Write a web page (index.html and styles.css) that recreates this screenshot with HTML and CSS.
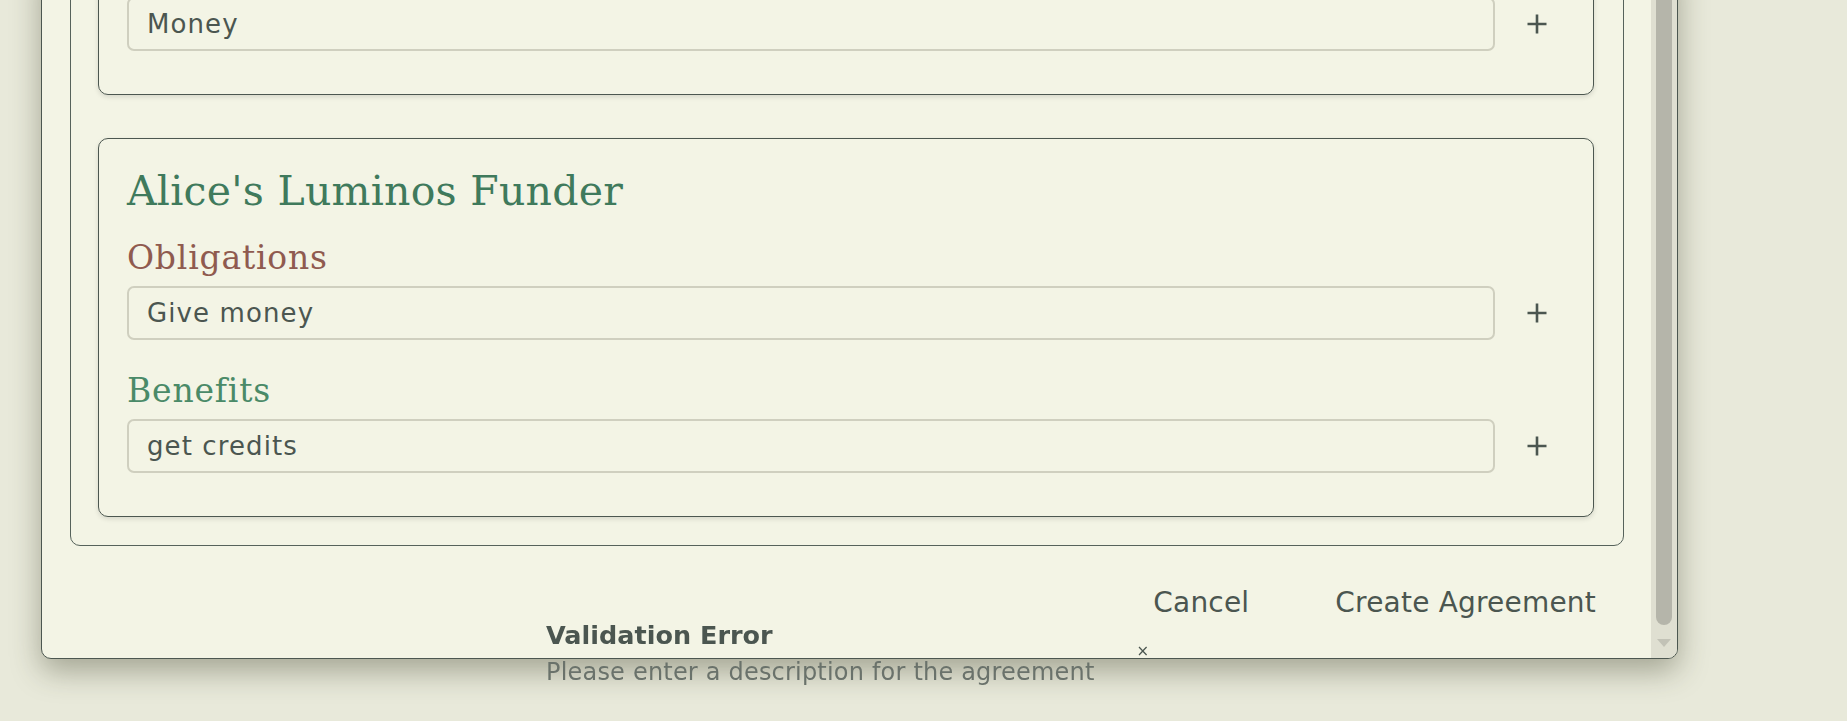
FILE: index.html
```html
<!DOCTYPE html>
<html lang="en">
<head>
<meta charset="utf-8">
<title>Create Agreement</title>
<link rel="stylesheet" href="styles.css">
</head>
<body>
<div class="backdrop">
  <div class="modal">
    <div class="modal-body">
      <div class="parties">
        <section class="party-card">
          <h2 class="party-title">Bob's Luminos Provider</h2>
          <div class="section">
            <h3 class="section-heading obligations">Obligations</h3>
            <div class="entry-row">
              <input class="entry-input" type="text" value="Provide credits">
              <button class="add-btn" type="button" aria-label="Add"><svg width="20" height="20" viewBox="0 0 20 20"><path d="M10 0.5V19.5M0.5 10H19.5" stroke="#4b5650" stroke-width="2.6" fill="none"/></svg></button>
            </div>
          </div>
          <div class="section">
            <h3 class="section-heading benefits">Benefits</h3>
            <div class="entry-row">
              <input class="entry-input" type="text" value="Money">
              <button class="add-btn" type="button" aria-label="Add"><svg width="20" height="20" viewBox="0 0 20 20"><path d="M10 0.5V19.5M0.5 10H19.5" stroke="#4b5650" stroke-width="2.6" fill="none"/></svg></button>
            </div>
          </div>
        </section>
        <section class="party-card">
          <h2 class="party-title">Alice's Luminos Funder</h2>
          <div class="section">
            <h3 class="section-heading obligations">Obligations</h3>
            <div class="entry-row">
              <input class="entry-input" type="text" value="Give money">
              <button class="add-btn" type="button" aria-label="Add"><svg width="20" height="20" viewBox="0 0 20 20"><path d="M10 0.5V19.5M0.5 10H19.5" stroke="#4b5650" stroke-width="2.6" fill="none"/></svg></button>
            </div>
          </div>
          <div class="section">
            <h3 class="section-heading benefits">Benefits</h3>
            <div class="entry-row">
              <input class="entry-input" type="text" value="get credits">
              <button class="add-btn" type="button" aria-label="Add"><svg width="20" height="20" viewBox="0 0 20 20"><path d="M10 0.5V19.5M0.5 10H19.5" stroke="#4b5650" stroke-width="2.6" fill="none"/></svg></button>
            </div>
          </div>
        </section>
      </div>
      <div class="modal-actions">
        <button class="btn-text" type="button">Cancel</button>
        <button class="btn-text" type="button">Create Agreement</button>
      </div>
    </div>
    <div class="scrollbar">
      <div class="scroll-thumb"></div>
      <div class="scroll-arrow"><span class="arrow-down"></span></div>
    </div>
  </div>
</div>
<div class="toast">
  <div class="toast-text">
    <div class="toast-title">Validation Error</div>
    <div class="toast-message">Please enter a description for the agreement</div>
  </div>
  <button class="toast-close" type="button">×</button>
</div>
</body>
</html>
```

FILE: styles.css
```css
html, body {
  margin: 0;
  padding: 0;
}

body {
  background: #e8e9da;
  font-family: "DejaVu Sans", sans-serif;
  color: #4b5650;
  overflow: hidden;
}

.backdrop {
  height: 721px;
  overflow: hidden;
  padding-left: 41px;
}

.modal {
  box-sizing: border-box;
  width: 1637px;
  height: 699px;
  margin-top: -40px;
  border: 1px solid #4c5750;
  border-radius: 0 0 10px 10px;
  background: #f3f4e5;
  display: flex;
  overflow: hidden;
  box-shadow: 0 12px 30px rgba(60, 62, 40, 0.4);
}

.modal-body {
  flex: 1;
  min-width: 0;
  display: flex;
  flex-direction: column;
  justify-content: flex-end;
  overflow: hidden;
  padding: 0 27px 26px 28px;
}

.parties {
  flex-shrink: 0;
  border: 1px solid #56625b;
  border-radius: 10px;
  padding: 27px 29px 28px 27px;
  display: flex;
  flex-direction: column;
  gap: 43px;
}

.party-card {
  border: 1px solid #4c5750;
  border-radius: 10px;
  padding: 28px;
  display: flex;
  flex-direction: column;
  box-shadow: 0 2px 5px rgba(0, 0, 0, 0.12);
}

.party-title {
  margin: 0 0 23px;
  font-family: "DejaVu Serif", serif;
  font-weight: normal;
  font-size: 41px;
  line-height: 48px;
  letter-spacing: 0.25px;
  color: #3f7a5c;
}

.section {
  display: flex;
  flex-direction: column;
}

.section + .section {
  margin-top: 16px;
}

.section-heading {
  margin: 0 0 8px;
  font-family: "DejaVu Serif", serif;
  font-weight: normal;
  font-size: 33px;
  line-height: 40px;
  letter-spacing: 0.8px;
}

.obligations {
  color: #8f5a4f;
}

.benefits {
  color: #4a8a68;
}

.entry-row {
  display: flex;
  align-items: center;
  gap: 14px;
  margin-bottom: 15px;
}

.entry-input {
  flex: 1;
  min-width: 0;
  box-sizing: border-box;
  height: 54px;
  border: 2px solid #cfcfbf;
  border-radius: 7px;
  background: transparent;
  padding: 0 18px;
  font-family: "DejaVu Sans", sans-serif;
  font-size: 26px;
  letter-spacing: 1.1px;
  color: #4b5650;
  outline: none;
}

.add-btn {
  width: 56px;
  height: 54px;
  border: 0;
  padding: 0;
  background: none;
  display: flex;
  align-items: center;
  justify-content: center;
}

.modal-actions {
  flex-shrink: 0;
  display: flex;
  justify-content: flex-end;
  gap: 30px;
  padding-top: 28px;
}

.btn-text {
  height: 58px;
  padding: 0 28px;
  border: 0;
  background: none;
  font-family: "DejaVu Sans", sans-serif;
  font-size: 28px;
  line-height: 58px;
  letter-spacing: 0.2px;
  color: #4b5650;
}

.scrollbar {
  width: 26px;
  flex-shrink: 0;
  background: #dfdfd1;
  display: flex;
  flex-direction: column;
  align-items: center;
}

.scroll-thumb {
  flex: 1;
  width: 16px;
  background: #b5b5aa;
  border-radius: 0 0 8px 8px;
}

.scroll-arrow {
  box-sizing: border-box;
  height: 33px;
  padding-top: 14px;
  display: flex;
  justify-content: center;
}

.arrow-down {
  width: 0;
  height: 0;
  border-left: 7px solid transparent;
  border-right: 7px solid transparent;
  border-top: 8px solid #c2c2b6;
}

.toast {
  position: fixed;
  left: 530px;
  top: 603px;
  padding: 16px;
  display: flex;
  align-items: center;
  gap: 42px;
}

.toast-title {
  font-weight: bold;
  font-size: 25.5px;
  line-height: 32px;
  color: #4b5650;
}

.toast-message {
  margin-top: 5px;
  font-size: 24px;
  line-height: 32px;
  letter-spacing: 0.2px;
  color: #6a726b;
}

.toast-close {
  margin-bottom: 6px;
  border: 0;
  padding: 0;
  background: none;
  font-family: "DejaVu Sans", sans-serif;
  font-size: 15px;
  color: #4b5650;
}
```
